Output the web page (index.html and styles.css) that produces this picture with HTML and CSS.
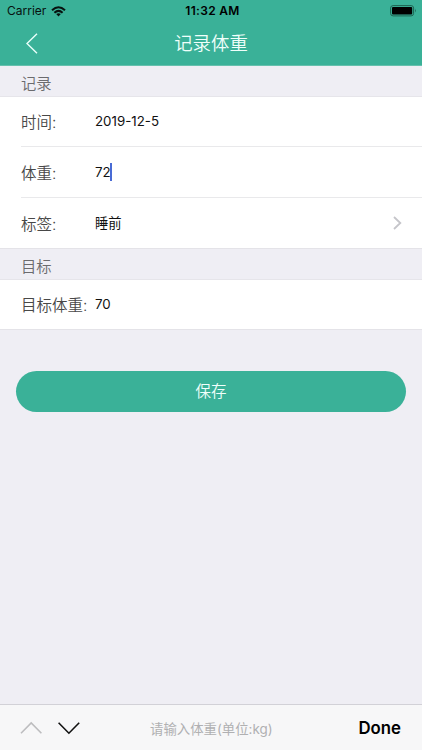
FILE: index.html
```html
<!DOCTYPE html>
<html lang="zh-CN">
<head>
<meta charset="utf-8">
<meta name="viewport" content="width=device-width, initial-scale=1">
<title>记录体重</title>
<link rel="stylesheet" href="styles.css">
</head>
<body>
<div class="screen">
  <header class="header">
    <div class="status">
      <div class="carrier"><span>Carrier</span>
        <svg class="wifi" width="15" height="11" viewBox="0 0 15 11" fill="none" stroke="#07120f" stroke-width="2"><path d="M1 4.2Q7.5-1.8 14 4.2M3.4 6.7Q7.5 3 11.6 6.7"/><path d="M5.2 8.1Q7.5 6.3 9.8 8.1L7.5 10.5Z" fill="#07120f" stroke="none"/></svg>
      </div>
      <time class="clock">11:32 AM</time>
      <svg class="battery" width="27" height="12" viewBox="0 0 27 12"><rect x=".6" y=".6" width="23" height="10.3" rx="2.5" fill="none" stroke="#1d6351"/><rect x="2" y="2" width="20.2" height="7.5" rx="1" fill="#000"/><path d="M25 3.8q1.7 1.9 0 3.8z" fill="#1d6351"/></svg>
    </div>
    <nav class="nav">
      <svg class="back" width="12" height="21" viewBox="0 0 12 21" fill="none" stroke="#e9fffa" stroke-width="1.4"><path d="M11 .8L1 10.5L11 20.2"/></svg>
      <h1 class="title">记录体重</h1>
    </nav>
  </header>
  <main class="content">
    <h2 class="section">记录</h2>
    <div class="group">
      <div class="row"><span class="label">时间:</span><span class="value">2019-12-5</span></div>
      <div class="row"><span class="label">体重:</span><span class="value">72</span><i class="caret"></i></div>
      <div class="row"><span class="label">标签:</span><span class="value">睡前</span>
        <svg class="more" width="9" height="14" viewBox="0 0 9 14" fill="none" stroke="#c5c5ca" stroke-width="1.8"><path d="M1 1L7.3 7L1 13"/></svg>
      </div>
    </div>
    <h2 class="section">目标</h2>
    <div class="group">
      <div class="row"><span class="label">目标体重:</span><span class="value">70</span></div>
    </div>
    <button class="save">保存</button>
  </main>
  <footer class="toolbar">
    <svg class="arrows" width="60" height="14" viewBox="0 0 60 14" fill="none" stroke-width="1.6"><path d="M1 12.2L11.2 2L21.4 12.2" stroke="#bdbdbf"/><path d="M38.6 1.8L48.9 12.2L59.2 1.8" stroke="#111"/></svg>
    <span class="hint">请输入体重(单位:kg)</span>
    <span class="done">Done</span>
  </footer>
</div>
</body>
</html>
```
FILE: styles.css
```css
* { box-sizing: border-box; }
body { margin: 0; background: #efeef4; font-family: Inter, "Noto Sans CJK SC", sans-serif; color: #000; }
.screen { width: 422px; height: 750px; display: flex; flex-direction: column; overflow: hidden; }
.header { height: 66px; background: #3ab198; flex: none; border-bottom: 1px solid #65c0ad; }
.status { height: 22px; display: grid; grid-template-columns: 1fr auto 1fr; align-items: center; padding: 0 5px 0 7px; }
.carrier { display: flex; align-items: center; gap: 5px; font-size: 12px; line-height: 22px; color: #07120f; }
.clock { font-size: 12px; font-weight: 600; line-height: 22px; letter-spacing: .3px; margin-left: 1px; }
.battery { justify-self: end; }
.nav { height: 42px; display: grid; grid-template-columns: 1fr auto 1fr; align-items: center; padding: 0 26px; }
.title { margin: 0; color: #f0fffb; font-size: 18.4px; font-weight: 350; line-height: 42px; }
.section { height: 31px; margin: 0; padding: 3px 21px 0; border-bottom: 1px solid #e6e5ea; font-size: 15.3px; font-weight: 350; line-height: 30px; color: #6b6b6e; }
.group { background: #fff; border-bottom: 1px solid #e4e3e8; }
.row { height: 49px; margin-left: 21px; padding-bottom: 1px; display: flex; align-items: center; }
.row + .row { height: 51px; border-top: 1px solid #e9e9eb; }
.label { width: 74px; flex: none; font-size: 15.5px; font-weight: 350; color: #484848; white-space: nowrap; }
.value { font-size: 13.3px; color: #111; }
.caret { width: 2px; height: 18px; margin-left: -1px; background: #496bd5; }
.more { margin-left: auto; margin-right: 20px; }
.save { display: block; width: 390px; height: 41px; margin: 41px 16px 0; border: 0; border-radius: 21px; background: #3ab198; color: #f0fffb; font: 350 15.5px/41px Inter, "Noto Sans CJK SC", sans-serif; padding: 0; }
.toolbar { height: 46px; margin-top: auto; flex: none; display: flex; align-items: center; padding: 0 21px 0 20px; border-top: 1px solid #d2d1d7; background: #f7f7f8; }
.hint { margin-left: 70px; font-size: 13.4px; color: #b0b0b2; white-space: nowrap; }
.done { margin-left: auto; font-size: 16.8px; font-weight: 600; }
```
